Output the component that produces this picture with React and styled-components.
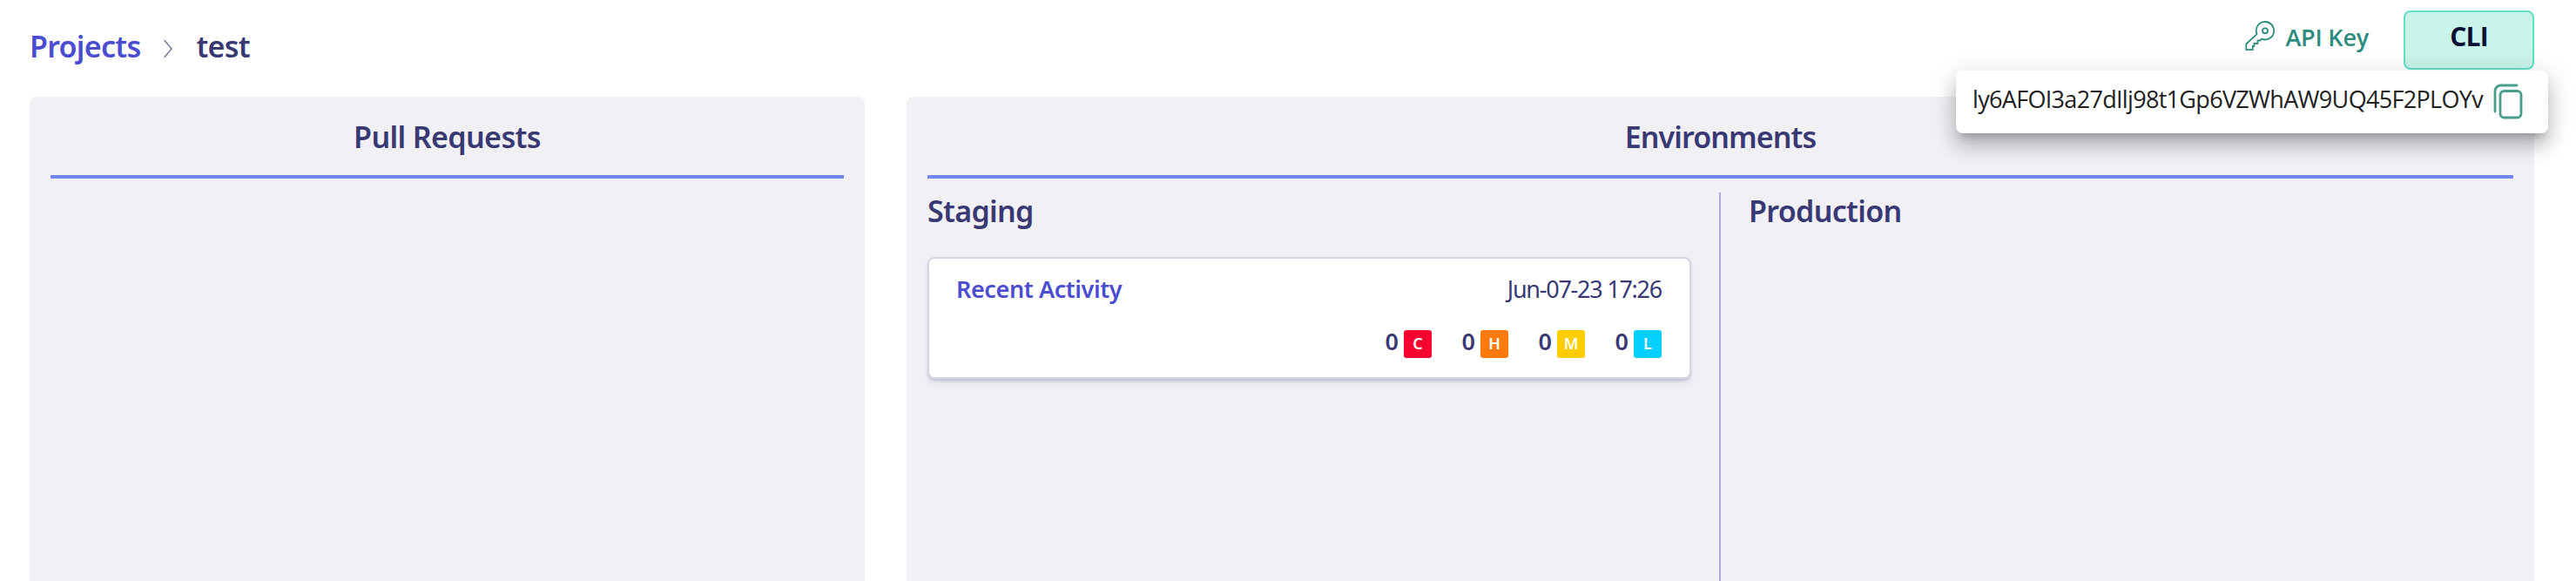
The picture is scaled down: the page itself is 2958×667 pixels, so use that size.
import React from "react";
import styled, { createGlobalStyle } from "styled-components";

const GlobalStyle = createGlobalStyle`
  * { box-sizing: border-box; }
  body {
    margin: 0;
    background: #fff;
    color: #383874;
    font-family: "Noto Sans", "Open Sans", sans-serif;
    overflow: hidden;
  }
`;

const Page = styled.div`
  position: relative;
  display: flex;
  flex-direction: column;
  width: 2958px;
  height: 667px;
  overflow: hidden;
`;

const Header = styled.header`
  display: flex;
  justify-content: space-between;
  align-items: flex-start;
  height: 111px;
  padding: 0 48px 0 34px;
`;

const Breadcrumb = styled.nav`
  display: flex;
  align-items: center;
  margin-top: 29px;
  font-size: 34px;
  font-weight: 600;
  line-height: 48px;
  letter-spacing: -0.7px;
`;

const Crumb = styled.span`
  color: ${(p) => (p.$link ? "#4b4dd0" : "#383874")};
`;

const Chevron = styled.svg`
  width: 12px;
  height: 22px;
  margin: 5px 27px 0 25px;
  fill: none;
  stroke: #75809a;
  stroke-width: 1.6;
`;

const Actions = styled.div`
  display: flex;
  align-items: flex-start;
  gap: 40px;
`;

const ApiKeyLink = styled.a`
  display: flex;
  align-items: flex-start;
  gap: 12px;
  margin-top: 23px;
  color: #2c8c7e;
  font: 600 27px/40px "Open Sans", sans-serif;
  letter-spacing: -0.2px;
`;

const KeyIcon = styled.svg`
  width: 34px;
  height: 36px;
  fill: none;
  stroke: #2c8c7e;
  stroke-width: 1.8;
  stroke-linejoin: round;
`;

const CliButton = styled.button`
  width: 150px;
  height: 68px;
  margin-top: 12px;
  padding: 0 0 8px;
  border: 2px solid #62dfc5;
  border-radius: 8px;
  background: #c9f4ea;
  color: #070f35;
  font: 700 30px/56px "Open Sans", sans-serif;
  letter-spacing: -0.8px;
`;

const KeyPopover = styled.div`
  position: absolute;
  top: 81px;
  right: 32px;
  display: flex;
  justify-content: space-between;
  width: 680px;
  height: 72px;
  padding: 0 29px 0 19px;
  border-radius: 8px;
  background: #fff;
  box-shadow: 0 10px 10px -6px rgba(0, 0, 0, 0.2),
    0 16px 20px 2px rgba(0, 0, 0, 0.14), 0 6px 28px 4px rgba(0, 0, 0, 0.12);
`;

const KeyValue = styled.span`
  color: #212121;
  font: 400 27px/65px "Open Sans", sans-serif;
  letter-spacing: -0.68px;
  white-space: nowrap;
`;

const CopyIcon = styled.svg`
  flex: none;
  width: 34px;
  height: 42px;
  margin-top: 15px;
  fill: none;
  stroke: #479e8c;
  stroke-width: 2.8;
  stroke-linecap: round;
`;

const Board = styled.main`
  display: flex;
  flex: 1;
  gap: 48px;
  padding: 0 48px 0 34px;
`;

const Panel = styled.section`
  display: flex;
  flex-direction: column;
  flex: ${(p) => p.$basis};
  padding: 0 24px;
  border-radius: 8px 8px 0 0;
  background: #f1f0f5;
`;

const PanelTitle = styled.h2`
  height: 94px;
  margin: 0;
  padding-top: 22px;
  border-bottom: 4px solid #7186f0;
  font-size: 34px;
  font-weight: 600;
  line-height: 48px;
  letter-spacing: ${(p) => p.$tracking};
  text-align: center;
`;

const Columns = styled.div`
  display: flex;
  flex: 1;
  margin-top: 16px;
`;

const StagingColumn = styled.div`
  width: 911px;
  padding-right: 32px;
  border-right: 2px solid #aaa7dc;
`;

const ProductionColumn = styled.div`
  flex: 1;
  padding-left: 32px;
`;

const ColumnTitle = styled.h3`
  margin: 0;
  padding-top: 1px;
  font-size: 34px;
  font-weight: 600;
  line-height: 41px;
  letter-spacing: -0.65px;
`;

const Card = styled.article`
  height: 140px;
  margin-top: 32px;
  padding: 15px 32px 0 31px;
  border: 2px solid #d6d5e3;
  border-radius: 8px;
  background: #fff;
  box-shadow: 0 2px 3px rgba(60, 60, 110, 0.2),
    0 9px 10px -4px rgba(110, 130, 160, 0.16);
`;

const CardHeader = styled.div`
  display: flex;
  justify-content: space-between;
  font-size: 27px;
  line-height: 40px;
`;

const CardTitle = styled.span`
  color: #4b4dd0;
  font-weight: 600;
  letter-spacing: -0.4px;
`;

const CardDate = styled.span`
  letter-spacing: -1.25px;
`;

const Counts = styled.div`
  display: flex;
  justify-content: flex-end;
  margin-top: 27px;
`;

const Count = styled.div`
  display: flex;
  justify-content: flex-end;
  gap: 6px;
  width: 88px;
  font-size: 27px;
  font-weight: 600;
  line-height: 25px;
`;

const Severity = styled.span`
  width: 32px;
  height: 32px;
  border-radius: 3px;
  background: ${(p) => p.$color};
  color: #fff;
  font-size: 18px;
  line-height: 30px;
  text-align: center;
`;

const severities = [
  ["C", "#f4042f"],
  ["H", "#ff7a0c"],
  ["M", "#ffcc00"],
  ["L", "#04cffe"],
];

export default function App() {
  return (
    <Page>
      <GlobalStyle />
      <Header>
        <Breadcrumb>
          <Crumb $link>Projects</Crumb>
          <Chevron viewBox="0 0 12 22">
            <path d="M1.5 1 10 11 1.5 21" />
          </Chevron>
          <Crumb>test</Crumb>
        </Breadcrumb>
        <Actions>
          <ApiKeyLink>
            <KeyIcon viewBox="0 0 34 36">
              <circle cx="23" cy="12.3" r="3" />
              <path d="M13.6 16.2A10.2 10.2 0 1 1 19 21.600L17.400 23.500H14.400V27H10.400V30H8.800V34.200H1.300V27.500Z" />
            </KeyIcon>
            API Key
          </ApiKeyLink>
          <CliButton>CLI</CliButton>
        </Actions>
      </Header>
      <Board>
        <Panel $basis="0 0 959px">
          <PanelTitle $tracking="-0.6px">Pull Requests</PanelTitle>
        </Panel>
        <Panel $basis="1">
          <PanelTitle $tracking="-0.9px">Environments</PanelTitle>
          <Columns>
            <StagingColumn>
              <ColumnTitle>Staging</ColumnTitle>
              <Card>
                <CardHeader>
                  <CardTitle>Recent Activity</CardTitle>
                  <CardDate>Jun-07-23 17:26</CardDate>
                </CardHeader>
                <Counts>
                  {severities.map(([letter, color]) => (
                    <Count key={letter}>
                      0<Severity $color={color}>{letter}</Severity>
                    </Count>
                  ))}
                </Counts>
              </Card>
            </StagingColumn>
            <ProductionColumn>
              <ColumnTitle>Production</ColumnTitle>
            </ProductionColumn>
          </Columns>
        </Panel>
      </Board>
      <KeyPopover>
        <KeyValue>ly6AFOI3a27dIlj98t1Gp6VZWhAW9UQ45F2PLOYv</KeyValue>
        <CopyIcon viewBox="0 0 34 42">
          <path d="M2 32V8.5A6.5 6.5 0 0 1 8.5 2H27" />
          <rect x="8" y="8.5" width="24" height="30.5" rx="4.5" />
        </CopyIcon>
      </KeyPopover>
    </Page>
  );
}
